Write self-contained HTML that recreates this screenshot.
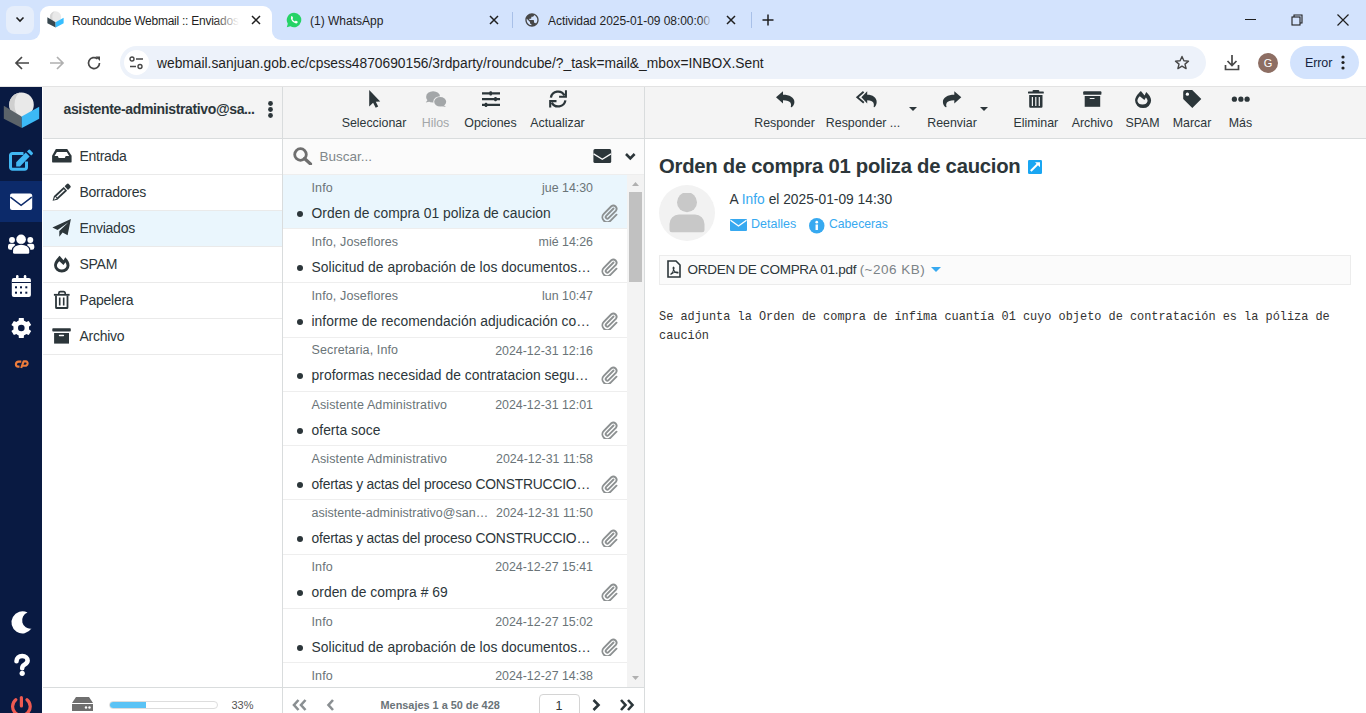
<!DOCTYPE html>
<html><head><meta charset="utf-8">
<style>
*{box-sizing:border-box;margin:0;padding:0}
html,body{width:1366px;height:713px;overflow:hidden;background:#fff;font-family:"Liberation Sans",sans-serif;color:#2c363a}
.a{position:absolute}
svg{display:block}
.nw{white-space:nowrap}
/* chrome */
#tabs{left:0;top:0;width:1366px;height:40px;background:#d3e3fd}
#toolbar{left:0;top:40px;width:1366px;height:46px;background:#fff}
.ttl{font-size:12px;color:#1f1f1f;top:14px}
/* page */
#page{left:0;top:86px;width:1366px;height:627px;background:#fff;border-top:1px solid #e1e1e1}
</style></head><body>
<!-- TAB STRIP -->
<div id="tabs" class="a">
  <!-- active tab -->
  <div class="a" style="left:40px;top:6px;width:232px;height:34px;background:#fff;border-radius:9px 9px 0 0"></div>
  <div class="a" style="left:30px;top:30px;width:10px;height:10px;background:#fff"></div>
  <div class="a" style="left:30px;top:30px;width:10px;height:10px;background:#d3e3fd;border-radius:0 0 9px 0"></div>
  <div class="a" style="left:272px;top:30px;width:10px;height:10px;background:#fff"></div>
  <div class="a" style="left:272px;top:30px;width:10px;height:10px;background:#d3e3fd;border-radius:0 0 0 9px"></div>
  <div class="a" style="left:6px;top:6px;width:28px;height:28px;border-radius:8px;background:#e6eefb"></div>
  <svg class="a" style="left:14px;top:13px" width="12" height="12" viewBox="0 0 12 12"><path d="M2.5 4.5L6 8l3.5-3.5" fill="none" stroke="#1f1f1f" stroke-width="1.6"/></svg>
  <!-- roundcube favicon -->
  <svg class="a" style="left:47px;top:11px" width="17" height="17" viewBox="0 0 37 37"><circle cx="18.5" cy="12.8" r="12.3" fill="#e9e9e9"/><path d="M18.5 0.5A12.3 12.3 0 0 0 18.5 25.1 7 12.3 0 0 1 18.5 0.5z" fill="#d6d6d6"/><path d="M0.8 13.7L18.6 24.4 18.9 36 0.8 26.7z" fill="#37474f"/><path d="M18.6 24.4L36.2 14.8V26.7L18.9 36z" fill="#37beff"/></svg>
  <div class="a nw ttl" style="left:72px;width:170px;overflow:hidden;letter-spacing:-0.25px">Roundcube Webmail :: Enviados</div>
  <div class="a" style="left:214px;top:8px;width:28px;height:26px;background:linear-gradient(90deg,rgba(255,255,255,0),#fff 90%)"></div>
  <svg class="a" style="left:251px;top:15px" width="10" height="10" viewBox="0 0 10 10"><path d="M1 1L9 9M9 1L1 9" stroke="#1f1f1f" stroke-width="1.5"/></svg>
  <!-- whatsapp tab -->
  <svg class="a" style="left:286px;top:12px" width="16" height="16" viewBox="0 0 16 16"><path d="M8 0.8a7.2 7.2 0 0 0-6.2 10.9L0.8 15.2l3.6-1A7.2 7.2 0 1 0 8 0.8z" fill="#25d366"/><path d="M5.3 4.2c.3-.2.7-.2.9.1l.8 1.4c.1.3 0 .6-.2.8l-.4.4c.5 1.1 1.4 2 2.5 2.5l.4-.4c.2-.2.5-.3.8-.2l1.4.8c.3.2.3.6.1.9-.5.8-1.3 1.1-2.2.8-2-.7-3.6-2.3-4.3-4.3-.3-.9 0-1.7.2-2.8z" fill="#fff"/></svg>
  <div class="a nw ttl" style="left:310px">(1) WhatsApp</div>
  <svg class="a" style="left:489px;top:15px" width="10" height="10" viewBox="0 0 10 10"><path d="M1 1L9 9M9 1L1 9" stroke="#1f1f1f" stroke-width="1.5"/></svg>
  <div class="a" style="left:512px;top:12px;width:1px;height:16px;background:#a8c0e8"></div>
  <!-- actividad tab -->
  <svg class="a" style="left:524px;top:12px" width="16" height="16" viewBox="0 0 24 24"><path d="M12 2C6.48 2 2 6.48 2 12s4.48 10 10 10 10-4.48 10-10S17.52 2 12 2zm-1 17.93c-3.95-.49-7-3.85-7-7.93 0-.62.08-1.21.21-1.79L9 15v1c0 1.1.9 2 2 2v1.93zm6.9-2.54c-.26-.81-1-1.39-1.9-1.39h-1v-3c0-.55-.45-1-1-1H8v-2h2c.55 0 1-.45 1-1V7h2c1.1 0 2-.9 2-2v-.41c2.93 1.19 5 4.06 5 7.41 0 2.08-.8 3.97-2.1 5.39z" fill="#474747"/></svg>
  <div class="a nw ttl" style="left:548px;width:166px;overflow:hidden;letter-spacing:-0.05px">Actividad 2025-01-09 08:00:00 | Ingreso</div>
  <div class="a" style="left:700px;top:8px;width:14px;height:26px;background:linear-gradient(90deg,rgba(211,227,253,0),#d3e3fd 85%)"></div>
  <svg class="a" style="left:726px;top:15px" width="10" height="10" viewBox="0 0 10 10"><path d="M1 1L9 9M9 1L1 9" stroke="#1f1f1f" stroke-width="1.5"/></svg>
  <div class="a" style="left:751px;top:12px;width:1px;height:16px;background:#a8c0e8"></div>
  <svg class="a" style="left:762px;top:14px" width="12" height="12" viewBox="0 0 12 12"><path d="M6 0.5V11.5M0.5 6H11.5" stroke="#1f1f1f" stroke-width="1.5"/></svg>
  <!-- window controls -->
  <div class="a" style="left:1245px;top:19px;width:11px;height:1px;background:#1f1f1f"></div>
  <svg class="a" style="left:1291px;top:14px" width="12" height="12" viewBox="0 0 12 12"><rect x="1" y="3" width="8" height="8" fill="none" stroke="#1f1f1f" stroke-width="1.1"/><path d="M3 3V1h8v8H9" fill="none" stroke="#1f1f1f" stroke-width="1.1"/></svg>
  <svg class="a" style="left:1337px;top:14px" width="12" height="12" viewBox="0 0 12 12"><path d="M0.5 0.5L11.5 11.5M11.5 0.5L0.5 11.5" stroke="#1f1f1f" stroke-width="1.2"/></svg>
</div>
<!-- TOOLBAR -->
<div id="toolbar" class="a">
  <svg class="a" style="left:14px;top:15px" width="16" height="16" viewBox="0 0 16 16"><path d="M15 8H2M8 2L2 8l6 6" fill="none" stroke="#474747" stroke-width="1.7"/></svg>
  <svg class="a" style="left:49px;top:15px" width="16" height="16" viewBox="0 0 16 16"><path d="M1 8h13M8 2l6 6-6 6" fill="none" stroke="#b0b0b0" stroke-width="1.7"/></svg>
  <svg class="a" style="left:86px;top:15px" width="16" height="16" viewBox="0 0 16 16"><path d="M13.5 8A5.5 5.5 0 1 1 11.5 3.8" fill="none" stroke="#474747" stroke-width="1.7"/><path d="M9.5 1.5h4.5v4.5z" fill="#474747"/></svg>
  <div class="a" style="left:120px;top:6px;width:1086px;height:33px;border-radius:17px;background:#edf2fa"></div>
  <div class="a" style="left:124px;top:10px;width:25px;height:25px;border-radius:50%;background:#fff"></div>
  <svg class="a" style="left:129px;top:16px" width="15" height="14" viewBox="0 0 15 14"><circle cx="3" cy="3" r="2" fill="none" stroke="#474747" stroke-width="1.4"/><path d="M7 3h7M1 10.5h6" stroke="#474747" stroke-width="1.4"/><circle cx="11" cy="10.5" r="2" fill="none" stroke="#474747" stroke-width="1.4"/></svg>
  <div class="a nw" style="left:157px;top:16px;font-size:13.8px;color:#1f1f1f">webmail.sanjuan.gob.ec/cpsess4870690156/3rdparty/roundcube/?_task=mail&amp;_mbox=INBOX.Sent</div>
  <svg class="a" style="left:1174px;top:15px" width="16" height="16" viewBox="0 0 16 16"><path d="M8 1.5l1.9 4.2 4.6.4-3.5 3 1.1 4.5L8 11.2 3.9 13.6 5 9.1 1.5 6.1l4.6-.4z" fill="none" stroke="#474747" stroke-width="1.4" stroke-linejoin="round"/></svg>
  <svg class="a" style="left:1224px;top:14px" width="16" height="17" viewBox="0 0 16 17"><path d="M8 1v10M3.5 7L8 11.5 12.5 7M1.5 11v4.5h13V11" fill="none" stroke="#474747" stroke-width="1.7"/></svg>
  <div class="a" style="left:1258px;top:13px;width:20px;height:20px;border-radius:50%;background:#8d6e63;color:#fff;font-size:11px;text-align:center;line-height:20px">G</div>
  <div class="a" style="left:1290px;top:6px;width:69px;height:33px;border-radius:17px;background:#d3e3fd"></div>
  <div class="a nw" style="left:1305px;top:16px;font-size:12.5px;color:#17233f;letter-spacing:-0.1px">Error</div>
  <svg class="a" style="left:1341px;top:14px" width="4" height="17" viewBox="0 0 4 17"><circle cx="2" cy="3" r="1.6" fill="#1f1f1f"/><circle cx="2" cy="8.5" r="1.6" fill="#1f1f1f"/><circle cx="2" cy="14" r="1.6" fill="#1f1f1f"/></svg>
</div>
<div id="page" class="a" style="display:none"></div>
<div class="a" style="left:0px;top:86px;width:1366px;height:1px;background:#e3e3e3;"></div>
<div class="a" style="left:0px;top:87px;width:42px;height:626px;background:#091a42;"></div>
<div class="a" style="left:0px;top:181px;width:42px;height:41px;background:#0c2a6a;"></div>
<svg class="a" style="left:3px;top:92px" width="37" height="37" viewBox="0 0 37 37"><circle cx="18.5" cy="12.8" r="12.3" fill="#e9e9e9"/><path d="M18.5 0.5A12.3 12.3 0 0 0 18.5 25.1 7 12.3 0 0 1 18.5 0.5z" fill="#cfcfcf"/><path d="M0.8 13.7L18.6 24.4 18.9 36 0.8 26.7z" fill="#5b6369"/><path d="M18.6 24.4L36.2 14.8V26.7L18.9 36z" fill="#3cb9f6"/></svg>
<svg class="a" style="left:0;top:0" width="42" height="713" viewBox="0 0 42 713"><path d="M23.5 153.4H12.4a1.9 1.9 0 0 0-1.9 1.9V167.3a1.9 1.9 0 0 0 1.9 1.9H24.6a1.9 1.9 0 0 0 1.9-1.9V161.5" fill="none" stroke="#41b8f3" stroke-width="3"/><path d="M16.2 166.6L16.2 162.2 25.8 152.6 29.6 156.4 20.0 166.6z" fill="#41b8f3"/><path d="M27 151.4L28.4 150Q29.3 149.1 30.2 150L32.6 152.4Q33.5 153.3 32.6 154.2L31.2 155.6z" fill="#41b8f3"/><rect x="10" y="193.6" width="22.2" height="16.4" rx="2" fill="#fff"/><path d="M10.4 197.2L21.1 205.4 31.8 197.2" fill="none" stroke="#0c2a6a" stroke-width="1.5"/><circle cx="12" cy="240" r="2.95" fill="#fff"/><circle cx="30.3" cy="240" r="2.95" fill="#fff"/><rect x="8" y="243.8" width="7.5" height="5.9" rx="2.2" fill="#fff"/><rect x="26.8" y="243.8" width="7.5" height="5.9" rx="2.2" fill="#fff"/><circle cx="21.1" cy="239.4" r="5.9" fill="#091a42"/><circle cx="21.1" cy="239.4" r="4.8" fill="#fff"/><path d="M11.9 254.8V250a9.2 6.3 0 0 1 18.4 0V254.8z" fill="#091a42"/><path d="M13.05 252.2V250a8.1 5.2 0 0 1 16.2 0V252.2a1.5 1.5 0 0 1-1.5 1.5H14.55a1.5 1.5 0 0 1-1.5-1.5z" fill="#fff"/><rect x="11.8" y="278" width="19.1" height="18.9" rx="2" fill="#fff"/><rect x="11.8" y="282" width="19.1" height="1" fill="#091a42"/><rect x="16" y="275" width="2.5" height="4" rx="1.2" fill="#fff"/><rect x="23.8" y="275" width="2.5" height="4" rx="1.2" fill="#fff"/><rect x="15" y="286.3" width="2" height="2" fill="#091a42"/><rect x="20" y="286.3" width="2" height="2" fill="#091a42"/><rect x="25.3" y="286.3" width="2" height="2" fill="#091a42"/><rect x="15" y="291.7" width="2" height="2" fill="#091a42"/><rect x="20" y="291.7" width="2" height="2" fill="#091a42"/><rect x="25.3" y="291.7" width="2" height="2" fill="#091a42"/><path d="M18.62 320.89 L18.85 318.00 L23.75 318.00 L23.98 320.89 L26.12 322.12 L28.74 320.88 L31.19 325.12 L28.80 326.76 L28.80 329.24 L31.19 330.88 L28.74 335.12 L26.12 333.88 L23.98 335.11 L23.75 338.00 L18.85 338.00 L18.62 335.11 L16.48 333.88 L13.86 335.12 L11.41 330.88 L13.80 329.24 L13.80 326.76 L11.41 325.12 L13.86 320.88 L16.48 322.12z" fill="#fff"/><circle cx="21.3" cy="328" r="7.8" fill="#fff"/><circle cx="21.3" cy="328" r="3.3" fill="#091a42"/><path d="M27.5 612.6A11 11 0 1 0 31.5 628.6 8.3 8.3 0 0 1 27.5 612.6z" fill="#fff"/><path d="M16.5 661.2C16.5 658 19 656 22.2 656 25.5 656 27.6 658.2 27.6 660.6 27.6 663.6 24.4 664.4 23.2 665.6 22.4 666.4 22.2 667 22.2 668.2" fill="none" stroke="#fff" stroke-width="4.6" stroke-linecap="round" stroke-linejoin="round"/><circle cx="22.2" cy="673.3" r="2.6" fill="#fff"/><path d="M15.8 699.8A8.8 8.8 0 1 0 27 699.8" fill="none" stroke="#ef5a51" stroke-width="3.2" stroke-linecap="round"/><path d="M21.4 697.5V706" stroke="#ef5a51" stroke-width="3.2" stroke-linecap="round"/></svg>
<svg class="a" style="left:0px;top:340px" width="42" height="40" viewBox="0 340 42 40"><path d="M21.3 361.6H18.6A2.9 2.9 0 0 0 15.9 364.2 2.4 2.4 0 0 0 18.2 366.6H19.5" fill="none" stroke="#ef7d3c" stroke-width="2.1"/><path d="M21.2 368L23.6 361.4H25.8A1.9 1.9 0 0 1 27.6 363.7 2.6 2.6 0 0 1 25 365.7H22.8" fill="none" stroke="#ef7d3c" stroke-width="2.1" stroke-linejoin="round"/></svg>
<div class="a" style="left:42px;top:87px;width:1px;height:626px;background:#fff;"></div>
<div class="a" style="left:43px;top:87px;width:239px;height:51px;background:#f4f4f4;"></div>
<div class="a" style="left:43px;top:138px;width:239px;height:1px;background:#d9dcdd;"></div>
<div class="a" style="left:282px;top:87px;width:1px;height:626px;background:#d9dcdd;"></div>
<div class="a nw" style="left:63.5px;top:102.15px;font-size:14px;line-height:14px;color:#2c363a;font-weight:700;letter-spacing:-0.36px;font-family:'Liberation Sans';">asistente-administrativo@sa...</div>
<svg class="a" style="left:267px;top:101px" width="7" height="17" viewBox="0 0 7 17"><circle cx="3.5" cy="2.5" r="2.4" fill="#2c363a"/><circle cx="3.5" cy="8.5" r="2.4" fill="#2c363a"/><circle cx="3.5" cy="14.5" r="2.4" fill="#2c363a"/></svg>
<div class="a" style="left:43px;top:174px;width:239px;height:1px;background:#eaeaea;"></div>
<div class="a nw" style="left:79.5px;top:149.15px;font-size:14px;line-height:14px;color:#2c363a;font-weight:400;letter-spacing:-0.28px;font-family:'Liberation Sans';">Entrada</div>
<div class="a" style="left:43px;top:210px;width:239px;height:1px;background:#eaeaea;"></div>
<div class="a nw" style="left:79.5px;top:185.15px;font-size:14px;line-height:14px;color:#2c363a;font-weight:400;letter-spacing:-0.28px;font-family:'Liberation Sans';">Borradores</div>
<div class="a" style="left:43px;top:211px;width:239px;height:35px;background:#eaf6fd;"></div>
<div class="a" style="left:43px;top:246px;width:239px;height:1px;background:#eaeaea;"></div>
<div class="a nw" style="left:79.5px;top:221.15px;font-size:14px;line-height:14px;color:#2c363a;font-weight:400;letter-spacing:-0.28px;font-family:'Liberation Sans';">Enviados</div>
<div class="a" style="left:43px;top:282px;width:239px;height:1px;background:#eaeaea;"></div>
<div class="a nw" style="left:79.5px;top:257.15px;font-size:14px;line-height:14px;color:#2c363a;font-weight:400;letter-spacing:-0.28px;font-family:'Liberation Sans';">SPAM</div>
<div class="a" style="left:43px;top:318px;width:239px;height:1px;background:#eaeaea;"></div>
<div class="a nw" style="left:79.5px;top:293.15px;font-size:14px;line-height:14px;color:#2c363a;font-weight:400;letter-spacing:-0.28px;font-family:'Liberation Sans';">Papelera</div>
<div class="a" style="left:43px;top:354px;width:239px;height:1px;background:#eaeaea;"></div>
<div class="a nw" style="left:79.5px;top:329.15px;font-size:14px;line-height:14px;color:#2c363a;font-weight:400;letter-spacing:-0.28px;font-family:'Liberation Sans';">Archivo</div>
<svg class="a" style="left:0;top:0" width="1366" height="713" viewBox="0 0 1366 713"><path d="M55.9 149.1H67.2L71.6 155.8V161.4a1.2 1.2 0 0 1-1.2 1.2H53.3a1.2 1.2 0 0 1-1.2-1.2V155.8z" fill="#2c363a"/><path d="M56.9 152H66.8L69.2 156H65.7L64.8 157.9H58.7L57.8 156H54.5z" fill="#fff"/><g transform="translate(52.6,200.8) rotate(-43)"><path d="M0 0L4.2-2.5H17.5V2.5H4.2z" fill="#2c363a"/><path d="M1.7 0L4.6-1.2V1.2z" fill="#fff"/><rect x="5.6" y="-0.7" width="10.5" height="1.4" fill="#fff"/><path d="M18.7-2.5H21.8a1.5 1.5 0 0 1 1.5 1.5V1a1.5 1.5 0 0 1-1.5 1.5H18.7z" fill="#2c363a"/></g><path d="M70.9 219.1L52.4 227.6 57.6 230.1 68.5 222.3 59.3 231.1V236.8L62.6 232.6 67.6 235.3z" fill="#2c363a"/><path d="M59.6 255.7L63.5 260.3 65.3 257.3C68 260 69.5 262.7 69.5 265.5A7.7 7.1 0 0 1 54.1 265.5C54.1 261.6 57 258.6 59.6 255.7z" fill="#2c363a"/><path d="M59.4 261.2L63.5 264.9 65.4 262.3C66.1 263.4 66.6 264.6 66.6 265.9A5 4.6 0 0 1 56.9 265.9C56.9 264 57.9 262.5 59.4 261.2z" fill="#fff"/><rect x="53.9" y="293.9" width="15.7" height="1.8" fill="#2c363a"/><path d="M58.8 294.2V293.2a1.6 1.6 0 0 1 1.6-1.6H63.6a1.6 1.6 0 0 1 1.6 1.6V294.2" fill="none" stroke="#2c363a" stroke-width="1.6"/><path d="M56 295.6V307.4a0.6 0.6 0 0 0 0.6 0.6H66.9a0.6 0.6 0 0 0 0.6-0.6V295.6" fill="none" stroke="#2c363a" stroke-width="1.8"/><path d="M59.7 297.4V305.6M63.7 297.4V305.6" stroke="#2c363a" stroke-width="1.6"/><rect x="52.3" y="328.3" width="18.5" height="3.3" rx="0.8" fill="#2c363a"/><rect x="54.1" y="333" width="14.9" height="10.6" fill="#2c363a"/><rect x="58.8" y="334.8" width="5.3" height="1.5" rx="0.7" fill="#fff"/></svg>
<div class="a" style="left:43px;top:687px;width:239px;height:1px;background:#d9dcdd;"></div>
<svg class="a" style="left:72px;top:697px" width="21" height="14" viewBox="0 0 21 14"><path d="M4 0h13l4 6H0z" fill="#6f6f6f"/><path d="M0 7h21v7H0z" fill="#6f6f6f"/><circle cx="14" cy="10.5" r="1.2" fill="#fff"/><circle cx="17.5" cy="10.5" r="1.2" fill="#fff"/></svg>
<div class="a" style="left:109px;top:701px;width:109px;height:8px;background:#fff;border:1px solid #ddd;border-radius:4px"></div>
<div class="a" style="left:110px;top:702px;width:36px;height:6px;background:#5bc3f5;border-radius:3px 0 0 3px"></div>
<div class="a nw" style="left:231.5px;top:699.69px;font-size:11px;line-height:11px;color:#555;font-weight:400;letter-spacing:0px;font-family:'Liberation Sans';">33%</div>
<div class="a" style="left:283px;top:87px;width:361px;height:51px;background:#f4f4f4;"></div>
<div class="a" style="left:283px;top:138px;width:361px;height:1px;background:#d9dcdd;"></div>
<div class="a" style="left:644px;top:87px;width:1px;height:626px;background:#d9dcdd;"></div>
<div class="a nw" style="left:314.0px;width:120px;text-align:center;top:116.50px;font-size:12.4px;line-height:12.4px;color:#2c363a;font-weight:400;letter-spacing:0px">Seleccionar</div>
<div class="a nw" style="left:375.5px;width:120px;text-align:center;top:116.50px;font-size:12.4px;line-height:12.4px;color:#a3a7a9;font-weight:400;letter-spacing:0px">Hilos</div>
<div class="a nw" style="left:430.5px;width:120px;text-align:center;top:116.50px;font-size:12.4px;line-height:12.4px;color:#2c363a;font-weight:400;letter-spacing:0px">Opciones</div>
<div class="a nw" style="left:497.5px;width:120px;text-align:center;top:116.50px;font-size:12.4px;line-height:12.4px;color:#2c363a;font-weight:400;letter-spacing:0px">Actualizar</div>
<div class="a" style="left:283px;top:139px;width:361px;height:35px;background:#fbfbfb;"></div>
<div class="a" style="left:283px;top:174px;width:361px;height:1px;background:#eeeeee;"></div>
<svg class="a" style="left:293px;top:147px" width="20" height="18" viewBox="0 0 20 18"><circle cx="7.5" cy="7.5" r="5.8" fill="none" stroke="#6f6f6f" stroke-width="2.8"/><path d="M11.5 11.5L17.5 17" stroke="#6f6f6f" stroke-width="3.2" stroke-linecap="round"/></svg>
<div class="a nw" style="left:319.5px;top:149.57px;font-size:13.5px;line-height:13.5px;color:#80878a;font-weight:400;letter-spacing:0px;font-family:'Liberation Sans';">Buscar...</div>
<svg class="a" style="left:0px;top:0px" width="1366" height="713" viewBox="0 0 1366 713"><rect x="593.4" y="149.1" width="17.8" height="13.9" rx="1.6" fill="#2c363a"/><path d="M593.6 153.9L602.3 159.3 611 153.9" fill="none" stroke="#fbfbfb" stroke-width="1.3"/><path d="M626 154L630.3 158.3 634.6 154" fill="none" stroke="#2c363a" stroke-width="2.6"/></svg>
<div class="a" style="left:0;top:0;width:1366px;height:687px;overflow:hidden">
<div class="a" style="left:283px;top:175px;width:344px;height:53px;background:#eaf6fd;"></div>
<div class="a" style="left:283px;top:228px;width:344px;height:1px;background:#eeeeee;"></div>
<div class="a nw" style="left:311.5px;top:181.82px;font-size:12.5px;line-height:12.5px;color:#6a7478;font-weight:400;letter-spacing:0.12px;font-family:'Liberation Sans';">Info</div>
<div class="a nw" style="right:773px;top:181.90px;font-size:12.4px;line-height:12.4px;color:#6a7478;font-weight:400;letter-spacing:0px;text-align:right;">jue 14:30</div>
<div class="a" style="left:297px;top:211px;width:6px;height:6px;background:#2c363a;border-radius:50%"></div>
<div class="a nw" style="left:311.5px;top:206.78px;font-size:13.85px;line-height:13.85px;color:#2c363a;font-weight:400;letter-spacing:0.04px;font-family:'Liberation Sans';">Orden de compra 01 poliza de caucion</div>
<svg class="a" style="left:601px;top:204px" width="18" height="18" viewBox="0 0 18 18"><path d="M12.5 4.5L5.2 11.8a1.6 1.6 0 0 0 2.3 2.3l7.3-7.3a3.2 3.2 0 0 0-4.5-4.5L2.8 9.8a4.8 4.8 0 0 0 6.8 6.8L15.5 10.7" fill="none" stroke="#8c9091" stroke-width="1.9" stroke-linecap="round"/></svg>
<div class="a" style="left:283px;top:282px;width:344px;height:1px;background:#eeeeee;"></div>
<div class="a nw" style="left:311.5px;top:236.04px;font-size:12.5px;line-height:12.5px;color:#6a7478;font-weight:400;letter-spacing:0.12px;font-family:'Liberation Sans';">Info, Joseflores</div>
<div class="a nw" style="right:773px;top:236.12px;font-size:12.4px;line-height:12.4px;color:#6a7478;font-weight:400;letter-spacing:0px;text-align:right;">mié 14:26</div>
<div class="a" style="left:297px;top:265px;width:6px;height:6px;background:#2c363a;border-radius:50%"></div>
<div class="a nw" style="left:311.5px;top:261.00px;font-size:13.85px;line-height:13.85px;color:#2c363a;font-weight:400;letter-spacing:0.04px;font-family:'Liberation Sans';">Solicitud de aprobación de los documentos…</div>
<svg class="a" style="left:601px;top:258px" width="18" height="18" viewBox="0 0 18 18"><path d="M12.5 4.5L5.2 11.8a1.6 1.6 0 0 0 2.3 2.3l7.3-7.3a3.2 3.2 0 0 0-4.5-4.5L2.8 9.8a4.8 4.8 0 0 0 6.8 6.8L15.5 10.7" fill="none" stroke="#8c9091" stroke-width="1.9" stroke-linecap="round"/></svg>
<div class="a" style="left:283px;top:337px;width:344px;height:1px;background:#eeeeee;"></div>
<div class="a nw" style="left:311.5px;top:290.26px;font-size:12.5px;line-height:12.5px;color:#6a7478;font-weight:400;letter-spacing:0.12px;font-family:'Liberation Sans';">Info, Joseflores</div>
<div class="a nw" style="right:773px;top:290.34px;font-size:12.4px;line-height:12.4px;color:#6a7478;font-weight:400;letter-spacing:0px;text-align:right;">lun 10:47</div>
<div class="a" style="left:297px;top:319px;width:6px;height:6px;background:#2c363a;border-radius:50%"></div>
<div class="a nw" style="left:311.5px;top:315.22px;font-size:13.85px;line-height:13.85px;color:#2c363a;font-weight:400;letter-spacing:0.04px;font-family:'Liberation Sans';">informe de recomendación adjudicación co…</div>
<svg class="a" style="left:601px;top:312px" width="18" height="18" viewBox="0 0 18 18"><path d="M12.5 4.5L5.2 11.8a1.6 1.6 0 0 0 2.3 2.3l7.3-7.3a3.2 3.2 0 0 0-4.5-4.5L2.8 9.8a4.8 4.8 0 0 0 6.8 6.8L15.5 10.7" fill="none" stroke="#8c9091" stroke-width="1.9" stroke-linecap="round"/></svg>
<div class="a" style="left:283px;top:391px;width:344px;height:1px;background:#eeeeee;"></div>
<div class="a nw" style="left:311.5px;top:344.48px;font-size:12.5px;line-height:12.5px;color:#6a7478;font-weight:400;letter-spacing:0.12px;font-family:'Liberation Sans';">Secretaria, Info</div>
<div class="a nw" style="right:773px;top:344.56px;font-size:12.4px;line-height:12.4px;color:#6a7478;font-weight:400;letter-spacing:0px;text-align:right;">2024-12-31 12:16</div>
<div class="a" style="left:297px;top:373px;width:6px;height:6px;background:#2c363a;border-radius:50%"></div>
<div class="a nw" style="left:311.5px;top:369.44px;font-size:13.85px;line-height:13.85px;color:#2c363a;font-weight:400;letter-spacing:0.04px;font-family:'Liberation Sans';">proformas necesidad de contratacion segu…</div>
<svg class="a" style="left:601px;top:366px" width="18" height="18" viewBox="0 0 18 18"><path d="M12.5 4.5L5.2 11.8a1.6 1.6 0 0 0 2.3 2.3l7.3-7.3a3.2 3.2 0 0 0-4.5-4.5L2.8 9.8a4.8 4.8 0 0 0 6.8 6.8L15.5 10.7" fill="none" stroke="#8c9091" stroke-width="1.9" stroke-linecap="round"/></svg>
<div class="a" style="left:283px;top:445px;width:344px;height:1px;background:#eeeeee;"></div>
<div class="a nw" style="left:311.5px;top:398.70px;font-size:12.5px;line-height:12.5px;color:#6a7478;font-weight:400;letter-spacing:0.12px;font-family:'Liberation Sans';">Asistente Administrativo</div>
<div class="a nw" style="right:773px;top:398.78px;font-size:12.4px;line-height:12.4px;color:#6a7478;font-weight:400;letter-spacing:0px;text-align:right;">2024-12-31 12:01</div>
<div class="a" style="left:297px;top:428px;width:6px;height:6px;background:#2c363a;border-radius:50%"></div>
<div class="a nw" style="left:311.5px;top:423.66px;font-size:13.85px;line-height:13.85px;color:#2c363a;font-weight:400;letter-spacing:0.04px;font-family:'Liberation Sans';">oferta soce</div>
<svg class="a" style="left:601px;top:421px" width="18" height="18" viewBox="0 0 18 18"><path d="M12.5 4.5L5.2 11.8a1.6 1.6 0 0 0 2.3 2.3l7.3-7.3a3.2 3.2 0 0 0-4.5-4.5L2.8 9.8a4.8 4.8 0 0 0 6.8 6.8L15.5 10.7" fill="none" stroke="#8c9091" stroke-width="1.9" stroke-linecap="round"/></svg>
<div class="a" style="left:283px;top:499px;width:344px;height:1px;background:#eeeeee;"></div>
<div class="a nw" style="left:311.5px;top:452.92px;font-size:12.5px;line-height:12.5px;color:#6a7478;font-weight:400;letter-spacing:0.12px;font-family:'Liberation Sans';">Asistente Administrativo</div>
<div class="a nw" style="right:773px;top:453.00px;font-size:12.4px;line-height:12.4px;color:#6a7478;font-weight:400;letter-spacing:0px;text-align:right;">2024-12-31 11:58</div>
<div class="a" style="left:297px;top:482px;width:6px;height:6px;background:#2c363a;border-radius:50%"></div>
<div class="a nw" style="left:311.5px;top:477.88px;font-size:13.85px;line-height:13.85px;color:#2c363a;font-weight:400;letter-spacing:-0.19px;font-family:'Liberation Sans';">ofertas y actas del proceso CONSTRUCCIO…</div>
<svg class="a" style="left:601px;top:475px" width="18" height="18" viewBox="0 0 18 18"><path d="M12.5 4.5L5.2 11.8a1.6 1.6 0 0 0 2.3 2.3l7.3-7.3a3.2 3.2 0 0 0-4.5-4.5L2.8 9.8a4.8 4.8 0 0 0 6.8 6.8L15.5 10.7" fill="none" stroke="#8c9091" stroke-width="1.9" stroke-linecap="round"/></svg>
<div class="a" style="left:283px;top:554px;width:344px;height:1px;background:#eeeeee;"></div>
<div class="a nw" style="left:311.5px;top:507.14px;font-size:12.5px;line-height:12.5px;color:#6a7478;font-weight:400;letter-spacing:0px;font-family:'Liberation Sans';">asistente-administrativo@san…</div>
<div class="a nw" style="right:773px;top:507.22px;font-size:12.4px;line-height:12.4px;color:#6a7478;font-weight:400;letter-spacing:0px;text-align:right;">2024-12-31 11:50</div>
<div class="a" style="left:297px;top:536px;width:6px;height:6px;background:#2c363a;border-radius:50%"></div>
<div class="a nw" style="left:311.5px;top:532.10px;font-size:13.85px;line-height:13.85px;color:#2c363a;font-weight:400;letter-spacing:-0.19px;font-family:'Liberation Sans';">ofertas y actas del proceso CONSTRUCCIO…</div>
<svg class="a" style="left:601px;top:529px" width="18" height="18" viewBox="0 0 18 18"><path d="M12.5 4.5L5.2 11.8a1.6 1.6 0 0 0 2.3 2.3l7.3-7.3a3.2 3.2 0 0 0-4.5-4.5L2.8 9.8a4.8 4.8 0 0 0 6.8 6.8L15.5 10.7" fill="none" stroke="#8c9091" stroke-width="1.9" stroke-linecap="round"/></svg>
<div class="a" style="left:283px;top:608px;width:344px;height:1px;background:#eeeeee;"></div>
<div class="a nw" style="left:311.5px;top:561.36px;font-size:12.5px;line-height:12.5px;color:#6a7478;font-weight:400;letter-spacing:0.12px;font-family:'Liberation Sans';">Info</div>
<div class="a nw" style="right:773px;top:561.44px;font-size:12.4px;line-height:12.4px;color:#6a7478;font-weight:400;letter-spacing:0px;text-align:right;">2024-12-27 15:41</div>
<div class="a" style="left:297px;top:590px;width:6px;height:6px;background:#2c363a;border-radius:50%"></div>
<div class="a nw" style="left:311.5px;top:586.32px;font-size:13.85px;line-height:13.85px;color:#2c363a;font-weight:400;letter-spacing:0.04px;font-family:'Liberation Sans';">orden de compra # 69</div>
<svg class="a" style="left:601px;top:583px" width="18" height="18" viewBox="0 0 18 18"><path d="M12.5 4.5L5.2 11.8a1.6 1.6 0 0 0 2.3 2.3l7.3-7.3a3.2 3.2 0 0 0-4.5-4.5L2.8 9.8a4.8 4.8 0 0 0 6.8 6.8L15.5 10.7" fill="none" stroke="#8c9091" stroke-width="1.9" stroke-linecap="round"/></svg>
<div class="a" style="left:283px;top:662px;width:344px;height:1px;background:#eeeeee;"></div>
<div class="a nw" style="left:311.5px;top:615.58px;font-size:12.5px;line-height:12.5px;color:#6a7478;font-weight:400;letter-spacing:0.12px;font-family:'Liberation Sans';">Info</div>
<div class="a nw" style="right:773px;top:615.66px;font-size:12.4px;line-height:12.4px;color:#6a7478;font-weight:400;letter-spacing:0px;text-align:right;">2024-12-27 15:02</div>
<div class="a" style="left:297px;top:645px;width:6px;height:6px;background:#2c363a;border-radius:50%"></div>
<div class="a nw" style="left:311.5px;top:640.54px;font-size:13.85px;line-height:13.85px;color:#2c363a;font-weight:400;letter-spacing:0.04px;font-family:'Liberation Sans';">Solicitud de aprobación de los documentos…</div>
<svg class="a" style="left:601px;top:638px" width="18" height="18" viewBox="0 0 18 18"><path d="M12.5 4.5L5.2 11.8a1.6 1.6 0 0 0 2.3 2.3l7.3-7.3a3.2 3.2 0 0 0-4.5-4.5L2.8 9.8a4.8 4.8 0 0 0 6.8 6.8L15.5 10.7" fill="none" stroke="#8c9091" stroke-width="1.9" stroke-linecap="round"/></svg>
<div class="a nw" style="left:311.5px;top:669.80px;font-size:12.5px;line-height:12.5px;color:#6a7478;font-weight:400;letter-spacing:0.12px;font-family:'Liberation Sans';">Info</div>
<div class="a nw" style="right:773px;top:669.88px;font-size:12.4px;line-height:12.4px;color:#6a7478;font-weight:400;letter-spacing:0px;text-align:right;">2024-12-27 14:38</div>
</div>
<div class="a" style="left:627px;top:175px;width:17px;height:512px;background:#f3f3f3;"></div>
<svg class="a" style="left:632px;top:182px" width="7" height="4" viewBox="0 0 7 4"><path d="M0 4L3.5 0 7 4z" fill="#b0b0b0"/></svg>
<div class="a" style="left:629px;top:192px;width:13px;height:90px;background:#c1c1c1;"></div>
<svg class="a" style="left:632px;top:676px" width="7" height="4" viewBox="0 0 7 4"><path d="M0 0L3.5 4 7 0z" fill="#b0b0b0"/></svg>
<div class="a" style="left:283px;top:687px;width:361px;height:1px;background:#d9dcdd;"></div>
<svg class="a" style="left:292px;top:699px" width="16" height="12" viewBox="0 0 16 12"><path d="M6.5 1L2 6l4.5 5M13.5 1L9 6l4.5 5" fill="none" stroke="#8a8f92" stroke-width="2.6"/></svg>
<svg class="a" style="left:326px;top:699px" width="9" height="12" viewBox="0 0 9 12"><path d="M7 1L2.5 6 7 11" fill="none" stroke="#8a8f92" stroke-width="2.6"/></svg>
<div class="a nw" style="left:380.5px;top:699.77px;font-size:10.9px;line-height:10.9px;color:#6a7478;font-weight:700;letter-spacing:0px;font-family:'Liberation Sans';">Mensajes 1 a 50 de 428</div>
<div class="a" style="left:539px;top:694px;width:41px;height:23px;background:#fff;border:1px solid #d4d4d4;border-radius:4px"></div>
<div class="a nw" style="left:555.5px;top:700.42px;font-size:12.5px;line-height:12.5px;color:#2c363a;font-weight:400;letter-spacing:0px;font-family:'Liberation Sans';">1</div>
<svg class="a" style="left:591px;top:699px" width="10" height="12" viewBox="0 0 10 12"><path d="M2.5 1L7.5 6 2.5 11" fill="none" stroke="#2c363a" stroke-width="2.6"/></svg>
<svg class="a" style="left:619px;top:699px" width="17" height="12" viewBox="0 0 17 12"><path d="M2 1L6.5 6 2 11M9 1L13.5 6 9 11" fill="none" stroke="#2c363a" stroke-width="2.6"/></svg>
<div class="a" style="left:645px;top:87px;width:721px;height:51px;background:#f4f4f4;"></div>
<div class="a" style="left:645px;top:138px;width:721px;height:1px;background:#d9dcdd;"></div>
<div class="a nw" style="left:724.5px;width:120px;text-align:center;top:116.50px;font-size:12.4px;line-height:12.4px;color:#2c363a;font-weight:400;letter-spacing:0px">Responder</div>
<div class="a nw" style="left:803.0px;width:120px;text-align:center;top:116.50px;font-size:12.4px;line-height:12.4px;color:#2c363a;font-weight:400;letter-spacing:0px">Responder ...</div>
<div class="a nw" style="left:892.0px;width:120px;text-align:center;top:116.50px;font-size:12.4px;line-height:12.4px;color:#2c363a;font-weight:400;letter-spacing:0px">Reenviar</div>
<div class="a nw" style="left:975.8px;width:120px;text-align:center;top:116.50px;font-size:12.4px;line-height:12.4px;color:#2c363a;font-weight:400;letter-spacing:0px">Eliminar</div>
<div class="a nw" style="left:1032.3px;width:120px;text-align:center;top:116.50px;font-size:12.4px;line-height:12.4px;color:#2c363a;font-weight:400;letter-spacing:0px">Archivo</div>
<div class="a nw" style="left:1082.5px;width:120px;text-align:center;top:116.50px;font-size:12.4px;line-height:12.4px;color:#2c363a;font-weight:400;letter-spacing:0px">SPAM</div>
<div class="a nw" style="left:1132.0px;width:120px;text-align:center;top:116.50px;font-size:12.4px;line-height:12.4px;color:#2c363a;font-weight:400;letter-spacing:0px">Marcar</div>
<div class="a nw" style="left:1180.5px;width:120px;text-align:center;top:116.50px;font-size:12.4px;line-height:12.4px;color:#2c363a;font-weight:400;letter-spacing:0px">Más</div>
<svg class="a" style="left:909px;top:107px" width="8" height="4" viewBox="0 0 8 4"><path d="M0 0h8L4 4z" fill="#2c363a"/></svg>
<svg class="a" style="left:980px;top:107px" width="8" height="4" viewBox="0 0 8 4"><path d="M0 0h8L4 4z" fill="#2c363a"/></svg>
<svg class="a" style="left:0;top:0" width="1366" height="713" viewBox="0 0 1366 713"><path d="M369.2 90V106.4L373.1 102.8 375.7 107.7 378.2 106.6 375.8 101.8 380.2 101.5z" fill="#2c363a"/><ellipse cx="433.1" cy="96.9" rx="7" ry="5.7" fill="#a3a6a8"/><path d="M427.5 100L425.8 102.6 430 101.5z" fill="#a3a6a8"/><ellipse cx="440.2" cy="101.8" rx="6.9" ry="5.6" fill="#f4f4f4"/><ellipse cx="440.2" cy="101.8" rx="6" ry="4.8" fill="#a3a6a8"/><path d="M443.5 105L446 107 441 106z" fill="#a3a6a8"/><path d="M482 93.3H500M482 99.2H500M482 104.9H500" stroke="#2c363a" stroke-width="2.2"/><rect x="489.4" y="91.3" width="2.6" height="4.2" rx="1" fill="#2c363a"/><rect x="494.2" y="97.1" width="2.6" height="4.2" rx="1" fill="#2c363a"/><rect x="484.7" y="102.8" width="2.6" height="4.2" rx="1" fill="#2c363a"/><path d="M550.9 97.6A7.3 7.3 0 0 1 564.6 95.6" fill="none" stroke="#2c363a" stroke-width="2.3"/><path d="M559.1 96.85H565.95V90.2" fill="none" stroke="#2c363a" stroke-width="2"/><path d="M565.4 100.4A7.3 7.3 0 0 1 551.8 102.6" fill="none" stroke="#2c363a" stroke-width="2.3"/><path d="M550.2 107.6V101.15H556.5" fill="none" stroke="#2c363a" stroke-width="2.1"/><path transform="translate(776,91.3)" d="M0 6L7 0V3.5C13.5 3.5 18.4 6.2 18.4 10.7 18.4 13.2 17 15.2 15.5 15.9 15 16.1 14.6 15.7 14.8 15.3 15.5 13.2 15.5 9 7 9V12.2z" fill="#2c363a"/><path transform="translate(861.4,91.3) scale(0.83,1)" d="M0 6L7 0V3.5C13.5 3.5 18.4 6.2 18.4 10.7 18.4 13.2 17 15.2 15.5 15.9 15 16.1 14.6 15.7 14.8 15.3 15.5 13.2 15.5 9 7 9V12.2z" fill="#2c363a"/><path d="M863.6 91.8L857.3 97.3 863.8 102.8" fill="none" stroke="#2c363a" stroke-width="1.9"/><path transform="translate(961.3,91.3) scale(-1,1)" d="M0 6L7 0V3.5C13.5 3.5 18.4 6.2 18.4 10.7 18.4 13.2 17 15.2 15.5 15.9 15 16.1 14.6 15.7 14.8 15.3 15.5 13.2 15.5 9 7 9V12.2z" fill="#2c363a"/><rect x="1028" y="91.4" width="15.8" height="2.2" rx="0.6" fill="#2c363a"/><path d="M1032.6 92V90.8a0.9 0.9 0 0 1 0.9-0.9H1038.3a0.9 0.9 0 0 1 0.9 0.9V92z" fill="#2c363a"/><path d="M1029.2 94.9H1042.5V106.5a1.2 1.2 0 0 1-1.2 1.2H1030.4a1.2 1.2 0 0 1-1.2-1.2z" fill="#2c363a"/><path d="M1032.4 96.9V106.1M1035.8 96.9V106.1M1039.3 96.9V106.1" stroke="#f4f4f4" stroke-width="1.2"/><rect x="1083.2" y="91.3" width="18.2" height="3.5" rx="0.9" fill="#2c363a"/><rect x="1084.7" y="96" width="15.5" height="10.8" fill="#2c363a"/><rect x="1089.6" y="97.9" width="5" height="1.2" rx="0.5" fill="#f4f4f4"/><path d="M1140.9 91L1144.6 95.6 1146.2 92.1C1149 94.5 1151.1 97.5 1151.1 100.6A8 7.5 0 0 1 1135.1 100.6C1135.1 96.8 1138 93.8 1140.9 91z" fill="#2c363a"/><path d="M1139.8 96.3L1144.4 100 1145.9 97.6C1146.9 98.7 1147.6 99.8 1147.6 101A5.2 4.4 0 0 1 1137.4 101C1137.4 99.2 1138.4 97.6 1139.8 96.3z" fill="#f4f4f4"/><path d="M1183.2 92A2.1 2.1 0 0 1 1185.3 89.9H1192.2L1201.3 99 1192.3 108 1183.2 98.9z" fill="#2c363a"/><circle cx="1187.4" cy="94.2" r="1.6" fill="#fff"/><circle cx="1234.4" cy="99.2" r="2.6" fill="#2c363a"/><circle cx="1240.9" cy="99.2" r="2.6" fill="#2c363a"/><circle cx="1247.1" cy="99.2" r="2.6" fill="#2c363a"/></svg>
<div class="a nw" style="left:659px;top:155.82px;font-size:20.3px;line-height:20.3px;color:#2c363a;font-weight:700;letter-spacing:-0.26px;font-family:'Liberation Sans';">Orden de compra 01 poliza de caucion</div>
<svg class="a" style="left:1028px;top:160px" width="14" height="14" viewBox="0 0 14 14"><rect width="14" height="14" rx="1.2" fill="#19a6f2"/><path d="M2.8 11L9.8 4" fill="none" stroke="#fff" stroke-width="2"/><path d="M7 2.2H12V7.2z" fill="#fff"/></svg>
<div class="a" style="left:659px;top:185px;width:56px;height:56px;background:#f2f2f2;border-radius:50%"></div>
<svg class="a" style="left:668px;top:193px" width="38" height="40" viewBox="-3 0 38 40"><circle cx="16" cy="9.2" r="10" fill="#c8c8c8"/><path d="M-1.5 31a9.5 9.5 0 0 1 9.5-9.5h16a9.5 9.5 0 0 1 9.5 9.5v5.8a2.5 2.5 0 0 1-2.5 2.5h-30A2.5 2.5 0 0 1-1.5 36.8z" fill="#c8c8c8"/></svg>
<div class="a nw" style="left:729.5px;top:192.82px;font-size:13.8px;line-height:13.8px;color:#2c363a;font-weight:400;letter-spacing:0px;font-family:'Liberation Sans';">A <span style="color:#37a9f0">Info</span> el 2025-01-09 14:30</div>
<svg class="a" style="left:730px;top:219px" width="17" height="12" viewBox="0 0 17 12"><rect width="17" height="12" rx="1" fill="#37a9f0"/><path d="M0.5 1.3L8.5 7 16.5 1.3" fill="none" stroke="#fff" stroke-width="1.4"/></svg>
<div class="a nw" style="left:751px;top:218.02px;font-size:12.5px;line-height:12.5px;color:#37a9f0;font-weight:400;letter-spacing:0px;font-family:'Liberation Sans';">Detalles</div>
<svg class="a" style="left:809px;top:217.5px" width="16" height="16" viewBox="0 0 16 16"><circle cx="7.75" cy="7.75" r="7.75" fill="#37a9f0"/><rect x="6.55" y="6.5" width="2.4" height="5.5" fill="#fff"/><circle cx="7.75" cy="4.2" r="1.35" fill="#fff"/></svg>
<div class="a nw" style="left:829px;top:218.27px;font-size:12.2px;line-height:12.2px;color:#37a9f0;font-weight:400;letter-spacing:0px;font-family:'Liberation Sans';">Cabeceras</div>
<div class="a" style="left:659px;top:255px;width:692px;height:30px;background:#fbfbfb;border:1px solid #ececec"></div>
<svg class="a" style="left:667px;top:260px" width="14" height="18" viewBox="0 0 14 18"><path d="M1 1h8l4 4v12H1z" fill="none" stroke="#2c363a" stroke-width="1.6"/><path d="M3.5 14.5c1.5-1 3-3.5 3.5-6 .3-1.5-.8-1.8-.9-.5 0 2 2 4.5 4.2 5 1 .2 1-.8 0-.9-2-.3-4.5.8-6.8 2.4z" fill="none" stroke="#2c363a" stroke-width="1.1"/></svg>
<div class="a nw" style="left:687.5px;top:262.57px;font-size:13.5px;line-height:13.5px;color:#2c363a;font-weight:400;letter-spacing:-0.28px;font-family:'Liberation Sans';">ORDEN DE COMPRA 01.pdf <span style="color:#7b8387;letter-spacing:0.5px">(~206 KB)</span></div>
<svg class="a" style="left:931px;top:267px" width="10" height="6" viewBox="0 0 10 6"><path d="M0 0h10L5 5z" fill="#37a9f0"/></svg>
<div class="a nw" style="left:659px;top:311.93px;font-size:11.9px;line-height:11.9px;color:#333;font-weight:400;letter-spacing:0px;font-family:'Liberation Mono';">Se adjunta la Orden de compra de ínfima cuantía 01 cuyo objeto de contratación es la póliza de</div>
<div class="a nw" style="left:659px;top:331.43px;font-size:11.9px;line-height:11.9px;color:#333;font-weight:400;letter-spacing:0px;font-family:'Liberation Mono';">caución</div>
</body></html>
